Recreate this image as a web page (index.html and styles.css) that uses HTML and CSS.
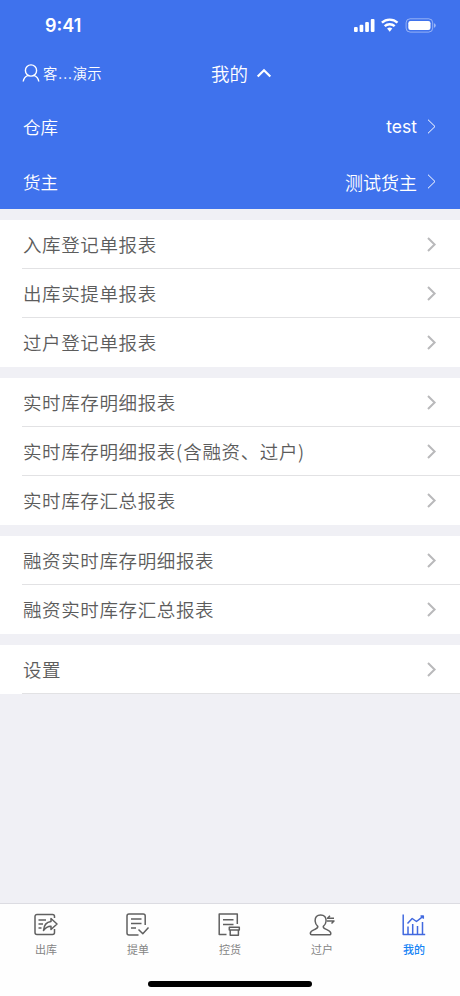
FILE: index.html
```html
<!DOCTYPE html>
<html lang="zh-CN">
<head>
<meta charset="utf-8">
<title>我的</title>
<link rel="stylesheet" href="styles.css">
</head>
<body>
<svg class="defs" width="0" height="0"><symbol id="chev" viewBox="0 0 12 16"><path d="M2 2 8.600 8.500 2 15"/></symbol><symbol id="thin" viewBox="0 0 12 16"><path d="M2 .700 9 7.500 2 14.300"/></symbol></svg>
<div class="screen">
  <header class="top">
    <div class="status">
      <span class="time">9:41</span>
      <svg class="status-icons" width="84" height="16" viewBox="0 0 84 16">
        <g fill="#fff">
          <rect x="1" y="10" width="3.7" height="5" rx="1"/><rect x="6.6" y="7.7" width="3.7" height="7.3" rx="1"/><rect x="12.2" y="5" width="3.7" height="10" rx="1"/><rect x="17.8" y="2" width="3.7" height="13" rx="1"/>
          <path d="M34.1 11.500a4.2 4.2 0 0 1 5.2 0L36.7 14.7Z"/>
          <rect x="55.3" y="4" width="22.2" height="9" rx="2.2"/>
          <path opacity=".5" d="M81 6.2a2.4 2.4 0 0 1 0 4.6Z"/>
        </g>
        <rect x="53.1" y="1.8" width="26.6" height="13.3" rx="4" fill="none" stroke="#fff" stroke-opacity=".45"/>
        <g fill="none" stroke="#fff" stroke-width="2.4"><path d="M28.900 5.700a11.400 11.400 0 0 1 15.600 0"/><path d="M31.700 9.200a7.300 7.300 0 0 1 10 0"/></g>
      </svg>
    </div>
    <div class="nav">
      <div class="user">
        <svg width="18" height="20" viewBox="0 0 18 20"><circle cx="9" cy="7.500" r="5.6"/><path d="M1.2 18.500c.4-3.200 2.400-5.300 5.200-6.200M16.800 18.500c-.4-3.200-2.400-5.300-5.200-6.200"/></svg>
        <span>客<span class="dots">...</span>演示</span>
      </div>
      <h1>我的</h1>
      <svg class="caret" width="16" height="12" viewBox="0 0 16 12"><path d="M1.700 9.500 8 3.300 14.300 9.500"/></svg>
    </div>
    <div class="pick"><span>仓库</span><span class="value">test</span><svg class="chev"><use href="#thin"/></svg></div>
    <div class="pick"><span>货主</span><span class="value cn">测试货主</span><svg class="chev"><use href="#thin"/></svg></div>
  </header>
  <main>
    <ul class="group">
      <li><span>入库登记单报表</span><svg class="chev"><use href="#chev"/></svg></li>
      <li><span>出库实提单报表</span><svg class="chev"><use href="#chev"/></svg></li>
      <li><span>过户登记单报表</span><svg class="chev"><use href="#chev"/></svg></li>
    </ul>
    <ul class="group">
      <li><span>实时库存明细报表</span><svg class="chev"><use href="#chev"/></svg></li>
      <li><span>实时库存明细报表<span class="paren">(</span>含融资、过户<span class="paren">)</span></span><svg class="chev"><use href="#chev"/></svg></li>
      <li><span>实时库存汇总报表</span><svg class="chev"><use href="#chev"/></svg></li>
    </ul>
    <ul class="group">
      <li><span>融资实时库存明细报表</span><svg class="chev"><use href="#chev"/></svg></li>
      <li><span>融资实时库存汇总报表</span><svg class="chev"><use href="#chev"/></svg></li>
    </ul>
    <ul class="group ruled">
      <li><span>设置</span><svg class="chev"><use href="#chev"/></svg></li>
    </ul>
  </main>
  <footer>
    <nav class="tabs">
      <a><svg viewBox="0 0 26 26"><path d="M21.500 6V4.500a2 2 0 0 0-2-2H4a2 2 0 0 0-2 2v16a2 2 0 0 0 2 2h15.500a2 2 0 0 0 2-2V17M5.500 8h7.500M5.500 12h4.500M5.500 16h3"/><path d="M10.500 18.500c.4-5.500 2.700-8.500 7.500-9V6.500l6 5.500-6 5.500v-3.300c-3.500-.1-5.500 1.500-7.500 4.300Z"/></svg>出库</a>
      <a><svg viewBox="0 0 26 26"><path d="M20.200 13V4a2 2 0 0 0-2-2H4a2 2 0 0 0-2 2v17a2 2 0 0 0 2 2h9.500M6 7h10.500M6 11.500h10.500M6 16h5M13.500 17.500l4.300 4.200L23.500 15.500"/></svg>提单</a>
      <a><svg viewBox="0 0 26 26"><path d="M20.300 12V2H2.200v20.500H9.500M6 7.700h10.500M6 12.500h10.500M12.300 15.300h10v2.700h-10ZM13.200 18v5.200h8.200V18"/></svg>控货</a>
      <a><svg viewBox="0 0 26 26"><path d="M11.600 3c-3.600 0-5.700 2.300-5.500 6 .2 2.500 1.300 4.300 2.700 5.300.2 2-1.200 2.400-3.500 3.300-2.500 1-4 1.800-4 3.700 0 1 .4 1.500 1.500 1.500h17.500c1.100 0 1.600-.5 1.500-1.500-.1-1.900-1.500-2.700-4-3.700-2.300-.9-3.800-1.300-3.500-3.300 1.500-1 2.600-2.800 2.800-5.300.2-3.700-1.900-6-5.500-6Z"/><path d="M18 6.200h7M21 3.700l-2.500 2.500M18 9h7L22.500 11.500"/></svg>过户</a>
      <a class="on"><svg viewBox="0 0 26 26"><path d="M2.200 2.500v20h22M7 14.500V22M11.700 12V22M16.500 14V22M21.500 10V22M6.500 11.500l4.700-5 4.300 3L22 4.300M19.500 4.100h2.800v2.600"/></svg>我的</a>
    </nav>
    <div class="home"></div>
  </footer>
</div>
</body>
</html>
```
FILE: styles.css
```css
* { box-sizing: border-box; }
body { margin: 0; font-family: "Noto Sans CJK SC", sans-serif; font-weight: 350; }
.defs { display: block; }
svg { display: block; flex: none; }
.screen { width: 460px; height: 996px; display: flex; flex-direction: column; background: #f0f0f5; overflow: hidden; }
.top { height: 209px; background: #3f72ed; color: #fff; }
.status { height: 50px; padding: 0 23px 0 45px; display: flex; justify-content: space-between; align-items: center; }
.time { font: 600 18px/22px Inter, sans-serif; letter-spacing: 0; padding-top: 2px; }
.nav { height: 49px; display: flex; align-items: center; padding: 0 0 3px 22px; }
.user { width: 189px; display: flex; align-items: center; gap: 3px; font-size: 14.300px; line-height: 20px; }
.dots { letter-spacing: 1px; padding-left: 1px; }
.user svg, .caret { fill: none; stroke: #fff; stroke-width: 1.4; }
h1 { margin: 0; font-size: 18.500px; font-weight: 350; line-height: 24px; }
.caret { margin: 0 0 0 8px; stroke-width: 2.200; }
.pick { height: 55px; padding: 0 22px 0 23px; display: flex; align-items: center; font-size: 17.500px; line-height: 24px; }
.value { margin-left: auto; margin-right: 9px; font-family: Inter, sans-serif; font-weight: 400; font-size: 17.500px; }
.value.cn { font-family: "Noto Sans CJK SC", sans-serif; font-weight: 350; font-size: 18px; }
.chev { width: 12px; height: 16px; fill: none; stroke: #fff; stroke-width: 1; }
main { flex: 1; padding-top: 11px; }
.group { list-style: none; margin: 0 0 11px; padding: 0 0 0 22px; background: #fff; }
.group li { height: 49px; padding: 0 22px 0 1px; display: flex; align-items: center; justify-content: space-between; border-bottom: 1px solid #e2e2e4; font-size: 18.500px; letter-spacing: .620px; line-height: 26px; color: #5c5c5c; }
.group:not(.ruled) li:last-child { border-color: transparent; }
.group .chev { stroke: #b9b9bb; stroke-width: 2; }
.paren { letter-spacing: 1.200px; }
footer { height: 93px; background: #fefefe; border-top: 1px solid #dcdce2; }
.tabs { display: grid; grid-template-columns: repeat(5, 1fr); height: 77px; }
.tabs a { display: flex; flex-direction: column; align-items: center; padding: 8px 0 0; font-size: 11px; line-height: 16px; color: #858585; gap: 3px; font-weight: 400; }
.tabs svg { width: 26px; height: 26px; fill: none; stroke: #606060; stroke-width: 1.5; stroke-linejoin: round; }
.tabs .on { color: #1683f5; font-weight: 500; }
.tabs .on svg { stroke: #4169df; }
.home { width: 164px; height: 6px; margin: 0 auto; border-radius: 3px; background: #000; }
```
